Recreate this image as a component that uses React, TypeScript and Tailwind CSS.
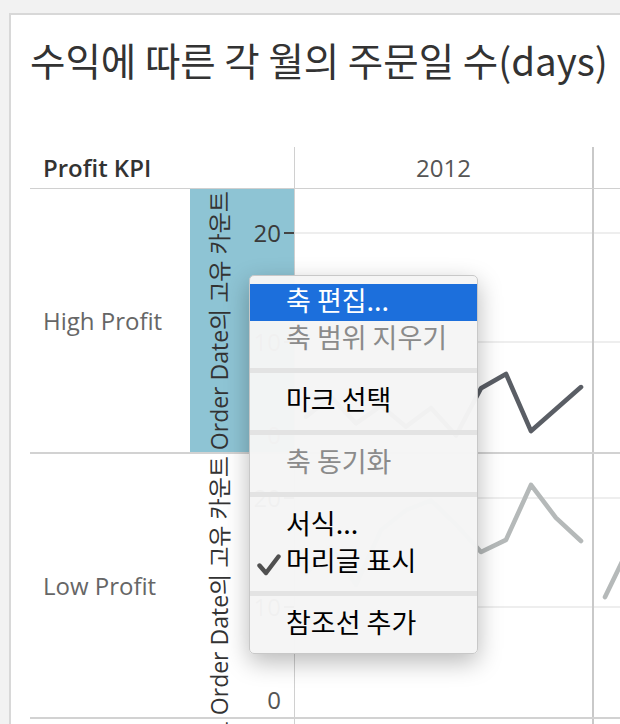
import React from "react";

const W = 297;
const H = 263;
const xAt = (i: number) => 11 + 25 * i;
const yAt = (v: number) => H - v * 11;

const highProfit2012 = [3.2, 5.0, 2.6, 4.2, 2.3, 4.0, 1.5, 5.8, 7.1, 1.9, 3.9, 5.9];
const lowProfit2012 = [13, 15.5, 12, 17, 18.8, 19.7, 17.5, 15.0, 16.1, 21.1, 18.1, 16.0];
const lowProfit2013 = [10.9, 15.6, 14.2, 18.0, 16.5, 19.2, 17.0, 20.1, 18.4, 22.0, 19.5, 17.8];

function points(values: number[]) {
  return values.map((v, i) => `${xAt(i)},${yAt(v)}`).join(" ");
}

function Pane({ values, color, width = W }: { values?: number[]; color?: string; width?: number }) {
  return (
    <svg width={width} height={H} className="block">
      <rect x={0} y={43} width={width} height={2} fill="#eeeeee" />
      <rect x={0} y={152} width={width} height={2} fill="#eeeeee" />
      {values && values.length > 0 && color && (
        <polyline
          points={points(values)}
          fill="none"
          stroke={color}
          strokeWidth={4.6}
          strokeLinejoin="round"
          strokeLinecap="round"
        />
      )}
    </svg>
  );
}

function Axis({ selected, ticks = true }: { selected?: boolean; ticks?: boolean }) {
  return (
    <div className={`w-[104px] h-full flex ${selected ? "bg-[#8ec4d4]" : "bg-white"}`}>
      <div className="w-[41px] h-full flex items-center justify-start pl-[17px]">
        <span className="[writing-mode:vertical-rl] [text-orientation:sideways] rotate-180 whitespace-nowrap text-[23px] leading-[24px] text-[#333] font-['Open_Sans','Noto_Sans_CJK_KR',sans-serif]">
          Order Date의 고유 카운트
        </span>
      </div>
      <div className="relative flex-1 h-full text-[24px] leading-none text-[#3a3a3a] font-['Open_Sans',sans-serif]">
        {ticks && (
          <>
            <span className="absolute right-[13px] top-[32px]">20</span>
            <span className="absolute right-0 top-[43px] w-[10px] h-[2px] bg-[#444]" />
            <span className="absolute right-[13px] top-[141px]">10</span>
            <span className="absolute right-0 top-[152px] w-[10px] h-[2px] bg-[#444]" />
            <span className="absolute right-[13px] top-[234px] text-[#555]">0</span>
          </>
        )}
      </div>
    </div>
  );
}

function Row({
  label,
  selected,
  values,
  color,
  next,
  nextColor,
  ticks = true,
}: {
  label: string;
  selected?: boolean;
  values: number[];
  color: string;
  next?: number[];
  nextColor?: string;
  ticks?: boolean;
}) {
  return (
    <div className="flex h-[265px] border-b-2 border-[#d2d2d2]">
      <div className="w-[160px] h-full flex items-center pl-[13px] text-[24px] text-[#666] font-['Open_Sans',sans-serif]">
        {label}
      </div>
      <Axis selected={selected} ticks={ticks} />
      <div className="w-[298px] h-full border-l border-[#d0d0d0]">
        <Pane values={values} color={color} />
      </div>
      <div className="flex-1 h-full border-l-2 border-[#c9c9c9] overflow-hidden">
        <Pane values={next} color={nextColor} width={300} />
      </div>
    </div>
  );
}

type Item = { label: string; disabled?: boolean; active?: boolean; checked?: boolean } | "sep";

const menu: Item[] = [
  { label: "축 편집...", active: true },
  { label: "축 범위 지우기", disabled: true },
  "sep",
  { label: "마크 선택" },
  "sep",
  { label: "축 동기화", disabled: true },
  "sep",
  { label: "서식..." },
  { label: "머리글 표시", checked: true },
  "sep",
  { label: "참조선 추가" },
];

function ContextMenu() {
  return (
    <div className="absolute left-[238px] top-[260px] w-[229px] rounded-[5px] border border-[#c8c8c8] bg-[rgba(245,245,245,0.975)] pt-[8px] pb-[10px] shadow-[0_8px_24px_rgba(0,0,0,0.28)] font-['Noto_Sans_CJK_KR',sans-serif]">
      {menu.map((it, idx) =>
        it === "sep" ? (
          <div key={idx} className="h-[25px] flex items-center">
            <div className="h-[5px] w-full bg-[#e3e3e3]" />
          </div>
        ) : (
          <div
            key={idx}
            className={`relative h-[37px] flex items-center pl-[36px] pb-[7px] text-[27px] leading-none whitespace-nowrap ${
              it.active ? "bg-[#1c6fdc] text-white" : it.disabled ? "text-[#8b8b8b]" : "text-black"
            }`}
          >
            {it.checked && (
              <svg width={24} height={22} viewBox="0 0 24 22" className="absolute left-[7px] top-[10px]">
                <path d="M2.5 11.5 L9 19 L21.5 2.5" fill="none" stroke="#505050" strokeWidth={4.4} strokeLinecap="round" strokeLinejoin="round" />
              </svg>
            )}
            {it.label}
          </div>
        )
      )}
    </div>
  );
}

export default function App() {
  return (
    <div className="w-[620px] h-[724px] overflow-hidden bg-[#f2f2f2] pl-[9px] pt-[13px]">
      <div className="relative h-[711px] overflow-hidden bg-white border-l-2 border-t-2 border-[#d8d8d8]">
        <h1 className="h-[132px] pl-[19px] pt-[25px] text-[38.5px] leading-[38px] font-normal text-[#333] whitespace-nowrap font-['Noto_Sans_CJK_KR',sans-serif]">
          수익에 따른 각 월의 주문일 수(days)
        </h1>
        <div className="ml-[19px]">
          <div className="flex h-[42px] border-b border-[#d0d0d0]">
            <div className="w-[264px] h-full flex items-center pl-[13px] text-[24px] font-semibold text-[#333] font-['Open_Sans',sans-serif]">
              Profit KPI
            </div>
            <div className="w-[298px] h-full border-l border-[#d0d0d0] flex items-center justify-center text-[24px] text-[#555] font-['Open_Sans',sans-serif]">
              2012
            </div>
            <div className="flex-1 h-full border-l-2 border-[#c9c9c9]" />
          </div>
          <Row label="High Profit" selected values={highProfit2012} color="#5a5e65" />
          <Row label="Low Profit" values={lowProfit2012} color="#b5b9b9" next={lowProfit2013} nextColor="#b5b9b9" />
          <Row label="" values={[]} color="#b5b9b9" ticks={false} />
        </div>
        <ContextMenu />
      </div>
    </div>
  );
}
